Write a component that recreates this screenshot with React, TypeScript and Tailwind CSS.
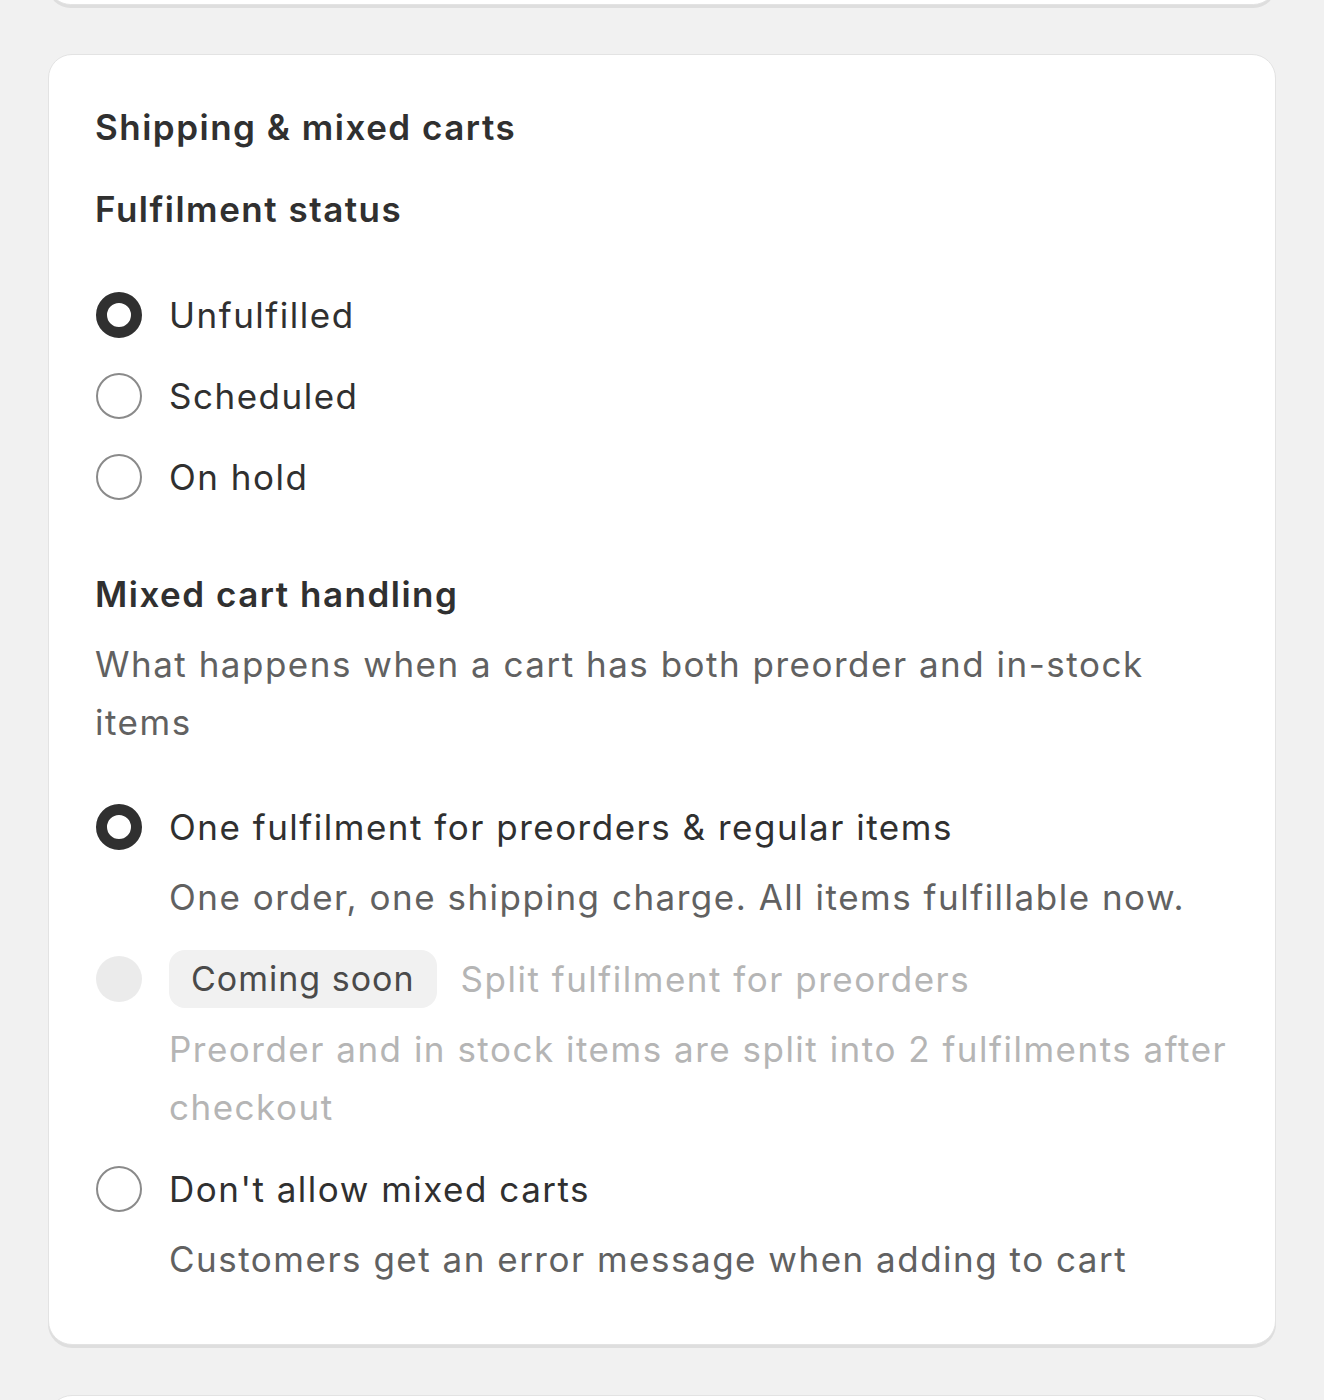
const fulfilmentOptions = [
  { label: "Unfulfilled", checked: true },
  { label: "Scheduled", checked: false },
  { label: "On hold", checked: false },
];

function Radio({ checked, disabled }: { checked?: boolean; disabled?: boolean }) {
  if (disabled) {
    return <span className="ml-[1px] h-[46px] w-[46px] shrink-0 rounded-full bg-[#ebebeb]" />;
  }
  return (
    <span
      className={`ml-[1px] h-[46px] w-[46px] shrink-0 rounded-full bg-white ${
        checked ? "border-[11px] border-[#303030]" : "border-[2px] border-[#8a8a8a]"
      }`}
    />
  );
}

export default function App() {
  return (
    <div
      className="h-[1400px] overflow-hidden bg-[#f1f1f1] px-[48px] text-[35px] tracking-[1.5px]"
      style={{ fontFamily: "Inter, 'Noto Sans', sans-serif" }}
    >
      {/* bottom edge of the card above */}
      <div className="-mt-[40px] h-[45px] rounded-[24px] border border-[#e3e3e3] bg-white shadow-[0_3px_0_rgba(0,0,0,0.08)]" />

      <section className="mt-[49px] rounded-[24px] border border-[#e3e3e3] bg-white px-[46px] pb-[56px] pt-[52px] shadow-[0_3px_0_rgba(0,0,0,0.08)]">
        <h2 className="font-semibold leading-[40px] text-[#303030]">Shipping &amp; mixed carts</h2>

        <h3 className="mt-[42px] font-semibold leading-[40px] text-[#303030]">Fulfilment status</h3>
        <div className="mt-[57px] flex flex-col gap-[23px]">
          {fulfilmentOptions.map((opt) => (
            <label key={opt.label} className="flex items-center gap-[27px]">
              <Radio checked={opt.checked} />
              <span className="leading-[58px] text-[#303030]">{opt.label}</span>
            </label>
          ))}
        </div>

        <h3 className="mt-[68px] font-semibold leading-[40px] text-[#303030]">Mixed cart handling</h3>
        <p className="mt-[21px] leading-[58px] text-[#616161]">
          What happens when a cart has both preorder and in-stock items
        </p>

        <div className="mt-[47px] flex flex-col gap-[24px]">
          <div>
            <label className="flex items-center gap-[27px]">
              <Radio checked />
              <span className="leading-[58px] text-[#303030]">One fulfilment for preorders &amp; regular items</span>
            </label>
            <p className="mt-[12px] pl-[74px] leading-[58px] text-[#616161]">
              One order, one shipping charge. All items fulfillable now.
            </p>
          </div>

          <div>
            <label className="flex items-center gap-[27px]">
              <Radio disabled />
              <span className="rounded-[16px] bg-[#f1f1f1] px-[22px] text-[34px] leading-[58px] tracking-[1px] text-[#4a4a4a]">
                Coming soon
              </span>
              <span className="-ml-[3px] leading-[58px] text-[#b5b5b5]">Split fulfilment for preorders</span>
            </label>
            <p className="mt-[12px] pl-[74px] leading-[58px] text-[#b5b5b5]">
              Preorder and in stock items are split into 2 fulfilments after checkout
            </p>
          </div>

          <div>
            <label className="flex items-center gap-[27px]">
              <Radio />
              <span className="leading-[58px] text-[#303030]">Don't allow mixed carts</span>
            </label>
            <p className="mt-[12px] pl-[74px] leading-[58px] text-[#616161]">
              Customers get an error message when adding to cart
            </p>
          </div>
        </div>
      </section>

      <div className="mt-[50px] h-[60px] rounded-[24px] border border-[#e3e3e3] bg-white" />
    </div>
  );
}
